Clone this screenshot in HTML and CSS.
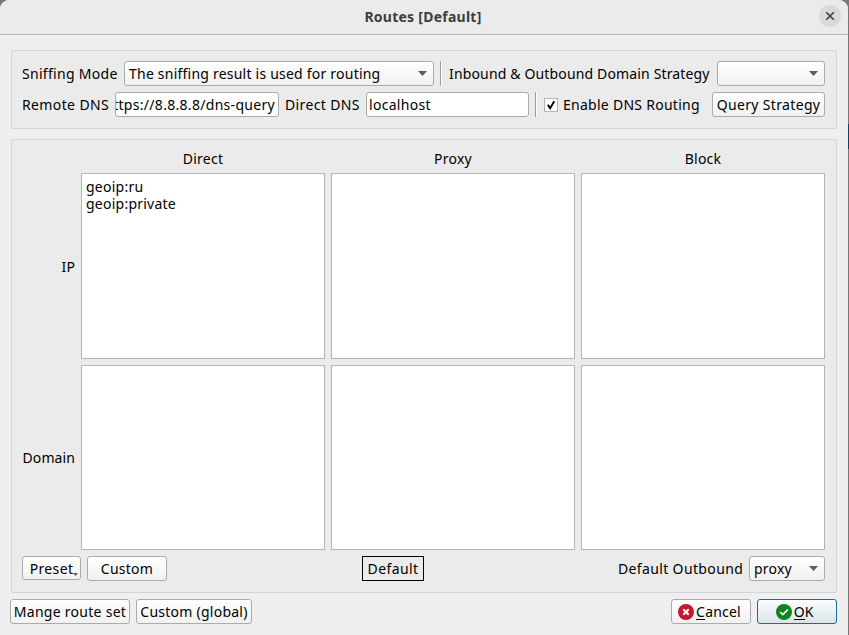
FILE: index.html
```html
<!DOCTYPE html>
<html lang="en">
<head>
<meta charset="utf-8">
<title>Routes [Default]</title>
<link rel="stylesheet" href="styles.css">
</head>
<body>
<div class="window">
  <header class="titlebar">
    <span class="title">Routes [Default]</span>
    <button class="close" aria-label="Close"><svg width="10" height="10" viewBox="0 0 10 10"><path d="M1.2 1.2l7.6 7.6M8.8 1.2L1.2 8.8" stroke="#3d3d3d" stroke-width="1.6"/></svg></button>
  </header>
  <main class="content">
    <section class="group options">
      <div class="row">
        <span class="label sniffing">Sniffing Mode</span>
        <div class="control combo mode"><span>The sniffing result is used for routing</span><i class="arrow"></i></div>
        <i class="separator"></i>
        <span class="label strategy">Inbound &amp; Outbound Domain Strategy</span>
        <div class="control combo domain-strategy"><i class="arrow"></i></div>
      </div>
      <div class="row">
        <span class="label remote">Remote DNS</span>
        <div class="control field remote-field"><span>https://8.8.8.8/dns-query</span></div>
        <span class="label direct">Direct DNS</span>
        <div class="control field direct-field"><span>localhost</span></div>
        <i class="separator"></i>
        <span class="check"><svg width="12" height="12" viewBox="0 0 12 12"><path d="M2.8 5.8L5.1 9.2L9.3 2.2" fill="none" stroke="#000" stroke-width="1.9"/></svg></span>
        <span class="label enable">Enable DNS Routing</span>
        <button class="control query">Query Strategy</button>
      </div>
    </section>
    <section class="group routes">
      <div class="matrix">
        <span></span><span class="head">Direct</span><span class="head">Proxy</span><span class="head">Block</span>
        <span class="side">IP</span>
        <div class="area">geoip:ru<br>geoip:private</div><div class="area"></div><div class="area"></div>
        <span class="side">Domain</span>
        <div class="area"></div><div class="area"></div><div class="area"></div>
      </div>
      <div class="actions">
        <button class="control preset">Preset<i class="arrow small"></i></button>
        <button class="control custom">Custom</button>
        <span class="default">Default</span>
        <span class="label outbound">Default Outbound</span>
        <div class="control combo proxy"><span>proxy</span><i class="arrow"></i></div>
      </div>
    </section>
    <footer class="footer">
      <button class="control manage">Mange route set</button>
      <button class="control global">Custom (global)</button>
      <button class="control cancel"><svg width="16" height="16" viewBox="0 0 16 16"><circle cx="8" cy="8" r="8" fill="#c7162b"/><path d="M5.3 5.3l5.4 5.4M10.7 5.3l-5.4 5.4" stroke="#fff" stroke-width="2"/></svg><span><span class="key">C</span>ancel</span></button>
      <button class="control ok"><svg width="16" height="16" viewBox="0 0 16 16"><circle cx="8" cy="8" r="8" fill="#0e8420"/><path d="M4.2 8l2.6 2.6 5-5" fill="none" stroke="#fff" stroke-width="1.7"/></svg><span><span class="key">O</span>K</span></button>
    </footer>
  </main>
</div>
</body>
</html>
```
FILE: styles.css
```css
* { box-sizing: border-box; }
body {
  margin: 0;
  width: 849px;
  height: 635px;
  overflow: hidden;
  background: linear-gradient(#777 124px, #0f4068 124px 149px, #777 149px);
  color: #000;
  font: 14px/17px "Noto Sans", "Open Sans", sans-serif;
}
.window { width: 848px; height: 635px; background: #efefef; border-radius: 9px 9px 0 0; overflow: hidden; }
.titlebar {
  height: 35px;
  background: #ebebeb;
  border-bottom: 1px solid #b9b9b9;
  display: grid;
  grid-template-columns: 1fr 22px;
  padding: 0 7px 2px 30px;
  align-items: center;
}
.title { text-align: center; font-weight: 700; color: #3d3d3d; white-space: nowrap; padding-right: 3px; letter-spacing: .25px; }
.close { width: 22px; height: 22px; padding: 0; border: 0; border-radius: 50%; background: #dadada; display: grid; place-items: center; }
.content { padding: 15px 11px 0; }
.group { width: 826px; background: #ebebeb; border: 1px solid #d4d4d4; border-radius: 2px; }
.options { height: 79px; padding: 10px; display: flex; flex-direction: column; gap: 6px; }
.row, .actions, .footer { display: flex; align-items: center; height: 25px; white-space: nowrap; }
.control {
  height: 25px;
  flex: none;
  font: inherit;
  color: #000;
  border: 1px solid #ababab;
  border-radius: 3px;
  background: linear-gradient(#fff, #f1f1f1);
  padding: 0;
  display: flex;
  align-items: center;
  justify-content: center;
  white-space: nowrap;
}
.combo { justify-content: space-between; padding: 0 6px 0 4px; }
.arrow { width: 9px; height: 5px; background: #5c5c5c; clip-path: polygon(0 0, 100% 0, 50% 100%); margin-left: auto; }
.field { background: #fff; overflow: hidden; padding: 0 3px 0 2px; justify-content: flex-start; }
.label { flex: none; }
.separator { width: 2px; height: 25px; flex: none; border-left: 1px solid #9c9c9c; border-right: 1px solid #fff; margin: 0 7px 0 6px; }
.sniffing { width: 102px; letter-spacing: .3px; }
.mode { width: 310px; letter-spacing: .22px; }
.strategy { width: 268px; letter-spacing: .15px; }
.domain-strategy { width: 108px; }
.remote { width: 93px; letter-spacing: .38px; }
.remote-field { width: 164px; justify-content: flex-end; letter-spacing: .3px; }
.direct { width: 81px; margin-left: 6px; letter-spacing: .36px; }
.direct-field { width: 163px; letter-spacing: .3px; }
.check { flex: none; width: 14px; height: 14px; border: 1px solid #b5b5b5; background: #fff; display: grid; place-items: center; margin-right: 5px; }
.enable { width: 149px; letter-spacing: .27px; }
.query { width: 113px; letter-spacing: .35px; }
.routes { height: 454px; margin-top: 10px; padding: 10px; }
.matrix { display: grid; grid-template-columns: 53px repeat(3, 244px); grid-template-rows: 17px 186px 185px; gap: 6px; }
.head { text-align: center; letter-spacing: .25px; }
.side { align-self: center; text-align: right; white-space: nowrap; letter-spacing: .1px; }
.area { border: 1px solid #b4b4b4; background: #fff; padding: 4px; white-space: nowrap; letter-spacing: .24px; }
.actions { margin-top: 6px; }
.preset { width: 59px; height: 24px; align-self: flex-start; position: relative; letter-spacing: .35px; }
.arrow.small { position: absolute; right: 2px; bottom: 3px; width: 5px; height: 3px; }
.custom { width: 80px; margin-left: 6px; letter-spacing: .25px; }
.default { width: 62px; height: 25px; border: 1px solid #000; line-height: 23px; text-align: center; margin-left: 195px; letter-spacing: .4px; }
.outbound { width: 131px; margin-left: 194px; letter-spacing: .36px; }
.proxy { width: 76px; letter-spacing: .2px; }
.footer { width: 827px; margin: 6px 0 0 -1px; }
.manage { width: 120px; letter-spacing: .27px; }
.global { width: 116px; margin-left: 6px; letter-spacing: .25px; }
.cancel { width: 80px; margin-left: auto; gap: 2px; padding-right: 3px; letter-spacing: .2px; }
.ok { width: 80px; margin-left: 6px; gap: 2px; padding-right: 5px; border-color: #1d6c98; background: linear-gradient(#fbfdfe, #dbe3e8); }
.key { display: inline-block; height: 17px; border-bottom: 1px solid #000; }
```
